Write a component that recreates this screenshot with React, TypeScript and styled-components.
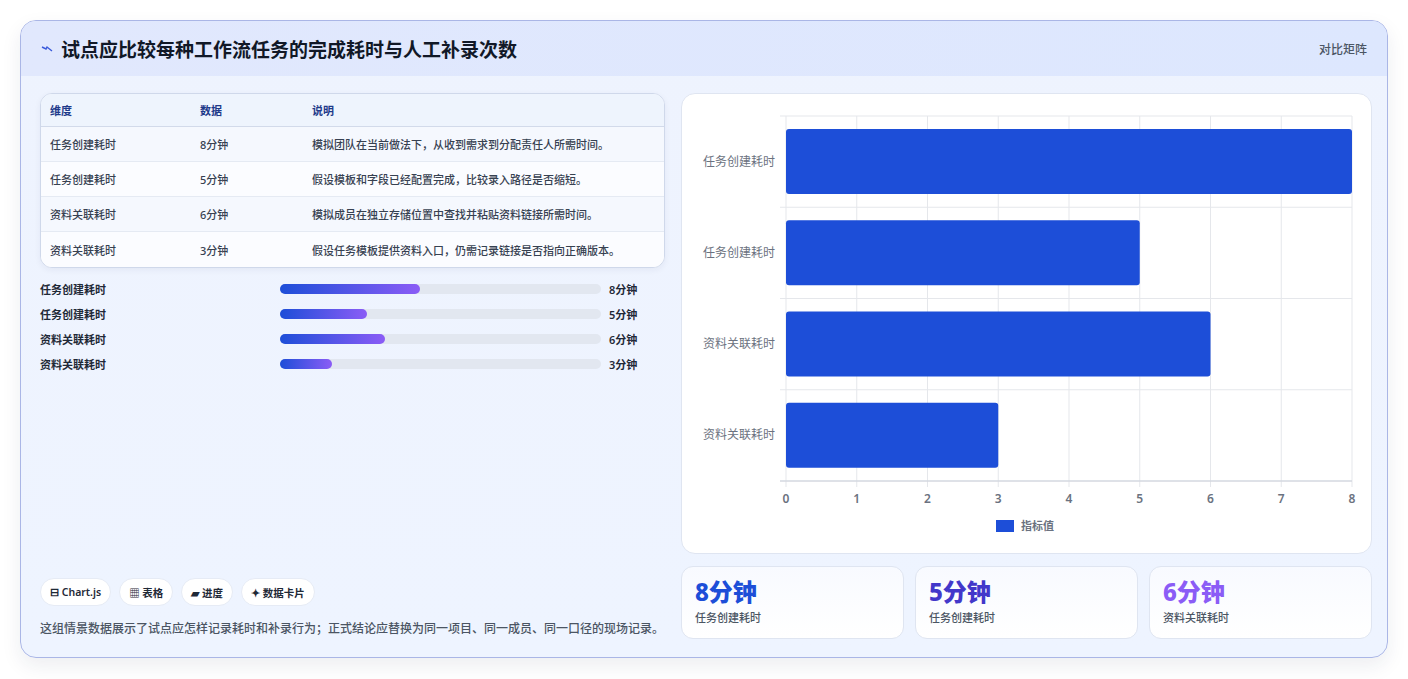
import styled, { createGlobalStyle } from 'styled-components';

const GlobalStyle = createGlobalStyle`
  * { box-sizing: border-box; margin: 0; padding: 0; }
  body {
    font-family: 'Noto Sans', 'Noto Sans CJK SC', sans-serif;
    background: #ffffff;
  }
`;

const rows = [
  { name: '任务创建耗时', value: 8, note: '模拟团队在当前做法下，从收到需求到分配责任人所需时间。' },
  { name: '任务创建耗时', value: 5, note: '假设模板和字段已经配置完成，比较录入路径是否缩短。' },
  { name: '资料关联耗时', value: 6, note: '模拟成员在独立存储位置中查找并粘贴资料链接所需时间。' },
  { name: '资料关联耗时', value: 3, note: '假设任务模板提供资料入口，仍需记录链接是否指向正确版本。' },
];

const Page = styled.div`
  padding: 20px 20px 22px 20px;
`;

const Card = styled.section`
  border: 1px solid #aab6e6;
  border-radius: 16px;
  background: linear-gradient(180deg, #eef3fe 0%, #eef4ff 100%);
  box-shadow: 0 8px 20px rgba(30, 40, 80, 0.08);
  overflow: hidden;
`;

const Header = styled.header`
  height: 55px;
  display: flex;
  align-items: center;
  justify-content: space-between;
  padding: 0 20px 0 20px;
  background: linear-gradient(90deg, #e1e8fd 0%, #dde7fe 100%);
`;

const Title = styled.h1`
  display: flex;
  align-items: center;
  gap: 8px;
  font-size: 19px;
  font-weight: 700;
  color: #111827;
`;

const Tag = styled.span`
  font-size: 12px;
  color: #4b5563;
  font-weight: 500;
`;

const Body = styled.div`
  display: grid;
  grid-template-columns: 625px 1fr;
  gap: 16px;
  padding: 17px 19px 18px 19px;
`;

const Left = styled.div`
  display: flex;
  flex-direction: column;
`;

const Table = styled.table`
  width: 100%;
  border-collapse: separate;
  border-spacing: 0;
  border: 1px solid #cfd8ea;
  border-radius: 12px;
  overflow: hidden;
  background: #fff;
  font-size: 11px;
  box-shadow: 0 2px 6px rgba(30, 40, 80, 0.06);
`;

const Th = styled.th`
  text-align: left;
  font-weight: 600;
  color: #1e3a8a;
  height: 33px;
  padding: 0 9px;
  background: #eef4fd;
  border-bottom: 1px solid #d2daea;
`;

const Td = styled.td<{ $alt: boolean }>`
  height: 35px;
  padding: 0 9px;
  color: #374151;
  font-weight: 500;
  background: ${(p) => (p.$alt ? '#f5f8fe' : '#fbfcff')};
  border-bottom: 1px solid #e5eaf3;
  tr:last-child & { border-bottom: none; }
`;

const Bars = styled.div`
  display: flex;
  flex-direction: column;
  gap: 7px;
  margin-top: 12px;
`;

const BarRow = styled.div`
  display: grid;
  grid-template-columns: 232px 321px 1fr;
  gap: 8px;
  align-items: center;
  font-size: 11px;
  font-weight: 600;
  color: #1f2937;
  height: 18px;
`;

const Track = styled.div`
  height: 10px;
  border-radius: 5px;
  background: #e2e7f0;
`;

const Fill = styled.div`
  height: 100%;
  border-radius: 5px;
  background: linear-gradient(90deg, #1d4ed8 0%, #8b5cf6 100%);
`;

const Spacer = styled.div`
  flex: 1;
`;

const Chips = styled.div`
  display: flex;
  gap: 8px;
`;

const Chip = styled.span`
  display: inline-flex;
  align-items: center;
  gap: 3px;
  height: 28px;
  padding: 0 9px;
  border-radius: 14px;
  background: #fff;
  border: 1px solid #e6ebf5;
  font-size: 10.5px;
  font-weight: 600;
  color: #1f2937;
`;

const Note = styled.p`
  margin-top: 13px;
  font-size: 12px;
  line-height: 20px;
  color: #4b5563;
  font-weight: 500;
`;

const Right = styled.div`
  display: flex;
  flex-direction: column;
  gap: 12px;
`;

const ChartBox = styled.div`
  height: 461px;
  border: 1px solid #dfe5f1;
  border-radius: 14px;
  background: #fff;
  overflow: hidden;
`;

const Stats = styled.div`
  display: grid;
  grid-template-columns: repeat(3, 1fr);
  gap: 11px;
`;

const Stat = styled.div`
  height: 73px;
  border: 1px solid #dfe5f1;
  border-radius: 12px;
  background: linear-gradient(180deg, #f8faff 0%, #ffffff 100%);
  padding: 10px 13px;
`;

const StatValue = styled.div<{ $color: string }>`
  font-size: 24px;
  font-weight: 800;
  line-height: 30px;
  color: ${(p) => p.$color};
`;

const StatLabel = styled.div`
  font-size: 11px;
  color: #4b5563;
  font-weight: 500;
  margin-top: 2px;
`;

const Chart = () => {
  const x0 = 104;
  const x1 = 670;
  const y0 = 22;
  const y1 = 387;
  const band = (y1 - y0) / 4;
  const sx = (v: number) => x0 + ((x1 - x0) * v) / 8;
  return (
    <svg width="689" height="461" viewBox="0 0 689 461" fontFamily="'Noto Sans','Noto Sans CJK SC',sans-serif">
      {Array.from({ length: 9 }, (_, i) => (
        <line key={i} x1={sx(i)} x2={sx(i)} y1={y0} y2={y1 + 6} stroke="#e5e7eb" />
      ))}
      {Array.from({ length: 5 }, (_, i) => (
        <line key={i} x1={x0 - 6} x2={x1} y1={y0 + band * i} y2={y0 + band * i} stroke="#e5e7eb" />
      ))}
      <line x1={x0 - 6} x2={x1} y1={y1} y2={y1} stroke="#cbd0da" />
      {rows.map((r, i) => (
        <g key={i}>
          <rect x={x0} y={y0 + band * i + 13} width={sx(r.value) - x0} height={65} rx={3} fill="#1d4ed8" />
          <text x={x0 - 11} y={y0 + band * i + band / 2 + 4} textAnchor="end" fontSize="12" fill="#6b7280">
            {r.name}
          </text>
        </g>
      ))}
      {Array.from({ length: 9 }, (_, i) => (
        <text key={i} x={sx(i)} y={409} textAnchor="middle" fontSize="12" fontWeight="600" fill="#6b7280">
          {i}
        </text>
      ))}
      <rect x={314} y={426} width={18} height={12} fill="#1d4ed8" />
      <text x={339} y={436} fontSize="11" fontWeight="600" fill="#6b7280">指标值</text>
    </svg>
  );
};

const App = () => {
  return (
    <>
      <GlobalStyle />
      <Page>
        <Card>
          <Header>
            <Title>
              <svg width="12" height="10" viewBox="0 0 12 10">
                <path d="M1 3 L5 5 L6 3 L11 7" stroke="#3b5bdb" strokeWidth="1.4" fill="none" />
              </svg>
              试点应比较每种工作流任务的完成耗时与人工补录次数
            </Title>
            <Tag>对比矩阵</Tag>
          </Header>
          <Body>
            <Left>
              <Table>
                <thead>
                  <tr>
                    <Th style={{ width: 150 }}>维度</Th>
                    <Th style={{ width: 112 }}>数据</Th>
                    <Th>说明</Th>
                  </tr>
                </thead>
                <tbody>
                  {rows.map((r, i) => (
                    <tr key={i}>
                      <Td $alt={i % 2 === 0}>{r.name}</Td>
                      <Td $alt={i % 2 === 0}>{r.value}分钟</Td>
                      <Td $alt={i % 2 === 0}>{r.note}</Td>
                    </tr>
                  ))}
                </tbody>
              </Table>
              <Bars>
                {rows.map((r, i) => (
                  <BarRow key={i}>
                    <span>{r.name}</span>
                    <Track>
                      <Fill style={{ width: `${r.value * 5.45}%` }} />
                    </Track>
                    <span>{r.value}分钟</span>
                  </BarRow>
                ))}
              </Bars>
              <Spacer />
              <Chips>
                <Chip>⊟ Chart.js</Chip>
                <Chip>▦ 表格</Chip>
                <Chip>▰ 进度</Chip>
                <Chip>✦ 数据卡片</Chip>
              </Chips>
              <Note>这组情景数据展示了试点应怎样记录耗时和补录行为；正式结论应替换为同一项目、同一成员、同一口径的现场记录。</Note>
            </Left>
            <Right>
              <ChartBox>
                <Chart />
              </ChartBox>
              <Stats>
                <Stat>
                  <StatValue $color="#1d4ed8">8分钟</StatValue>
                  <StatLabel>任务创建耗时</StatLabel>
                </Stat>
                <Stat>
                  <StatValue $color="#4338ca">5分钟</StatValue>
                  <StatLabel>任务创建耗时</StatLabel>
                </Stat>
                <Stat>
                  <StatValue $color="#8b5cf6">6分钟</StatValue>
                  <StatLabel>资料关联耗时</StatLabel>
                </Stat>
              </Stats>
            </Right>
          </Body>
        </Card>
      </Page>
    </>
  );
};

export default App;
